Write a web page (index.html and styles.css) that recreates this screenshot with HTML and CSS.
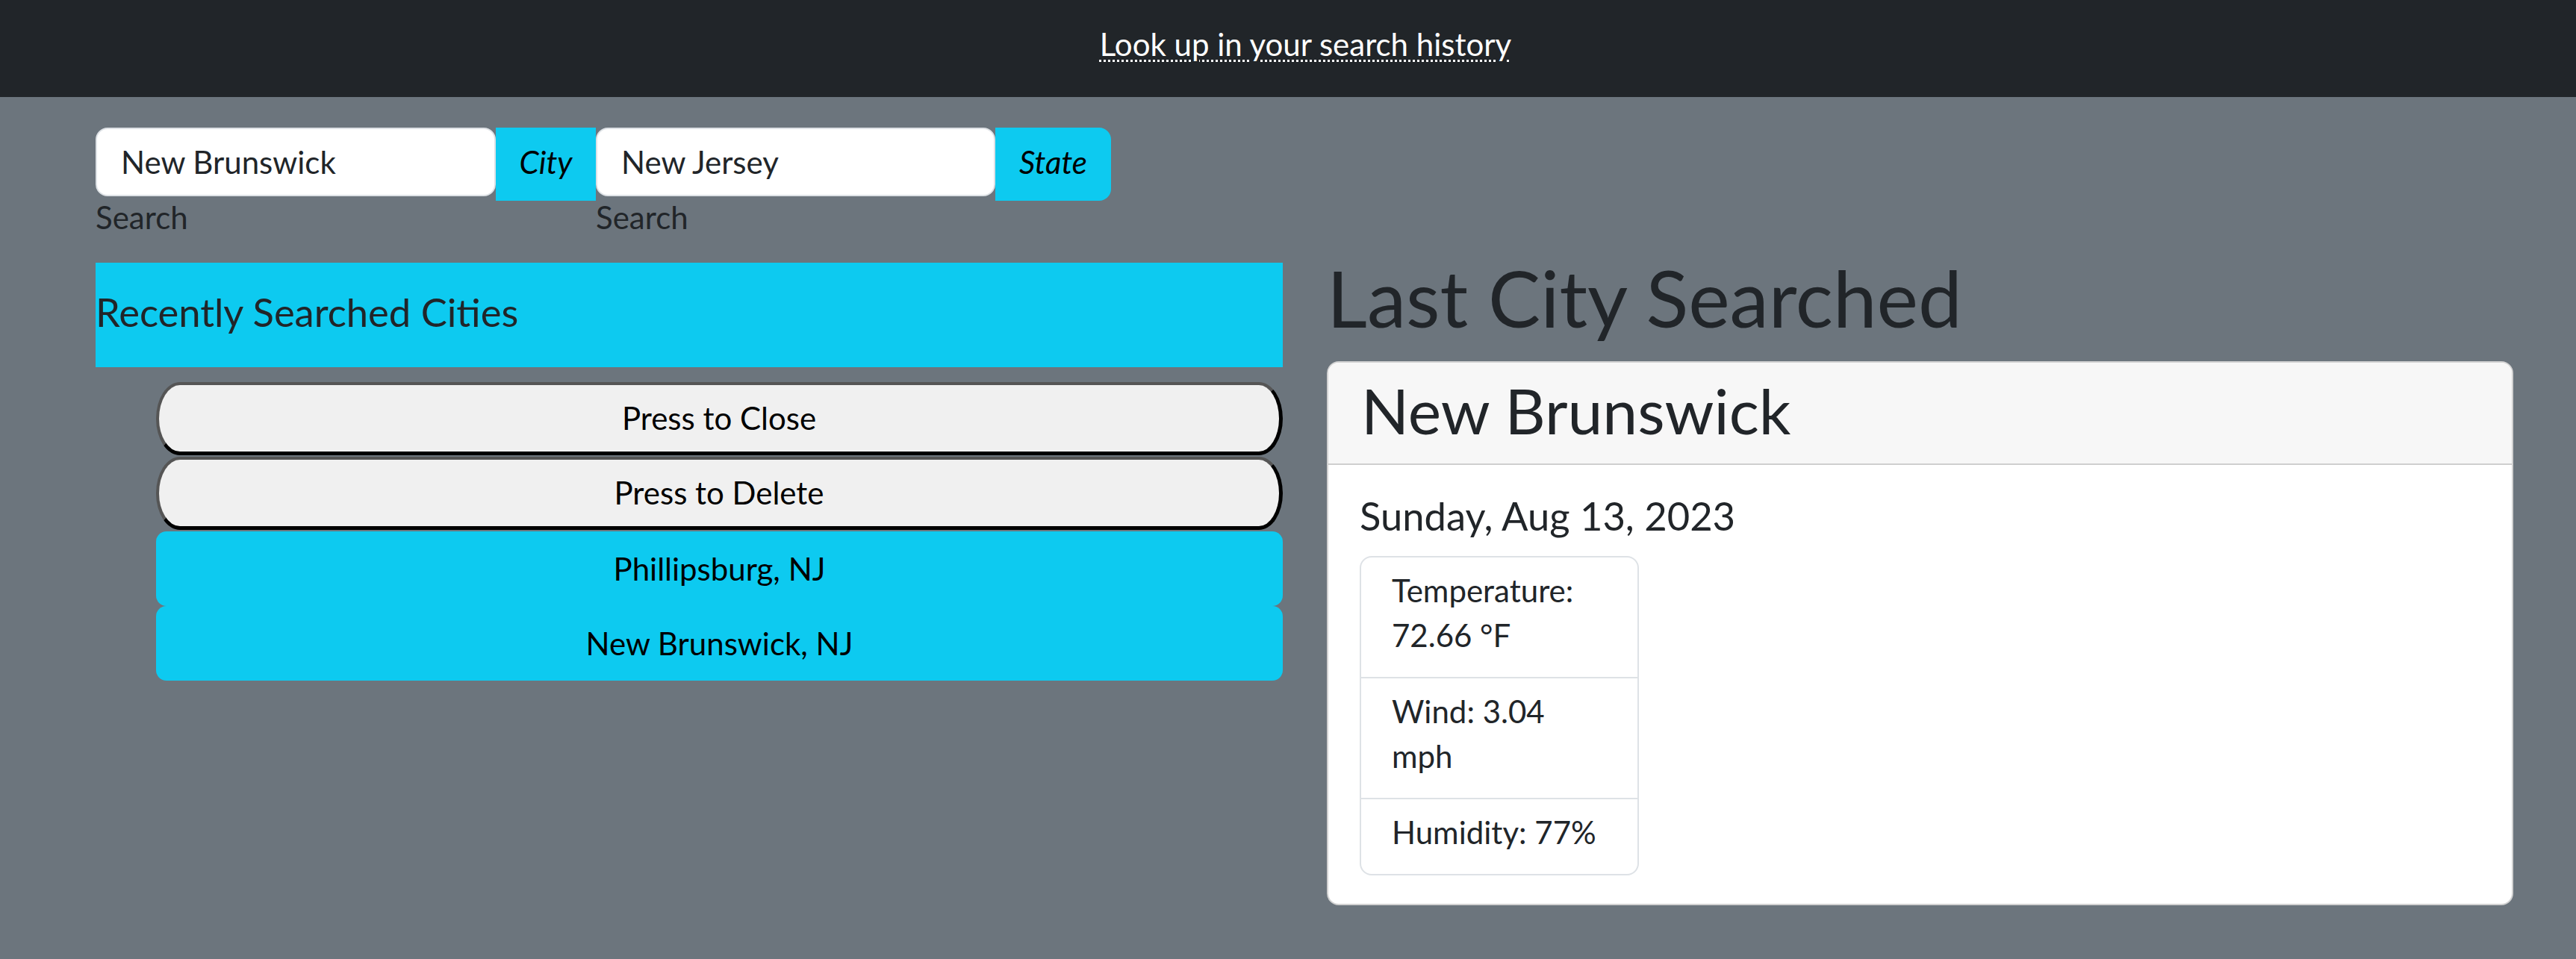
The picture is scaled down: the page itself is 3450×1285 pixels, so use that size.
FILE: index.html
```html
<!DOCTYPE html>
<html lang="en">
<head>
<meta charset="utf-8">
<title>Weather Dashboard</title>
<link rel="stylesheet" href="styles.css">
</head>
<body>
<header class="navbar">
  <abbr class="nav-link" title="Search history">Look up in your search history</abbr>
</header>

<main class="page">
  <form class="search-row">
    <div class="field">
      <div class="group">
        <input class="text-input" type="text" value="New Brunswick">
        <span class="addon">City</span>
      </div>
      <label class="field-label">Search</label>
    </div>
    <div class="field">
      <div class="group">
        <input class="text-input" type="text" value="New Jersey">
        <span class="addon addon-end">State</span>
      </div>
      <label class="field-label">Search</label>
    </div>
  </form>

  <div class="columns">
    <section class="history">
      <h5 class="history-title">Recently Searched Cities</h5>
      <ul class="history-list">
        <li><button class="btn-plain" type="button">Press to Close</button></li>
        <li><button class="btn-plain" type="button">Press to Delete</button></li>
        <li><button class="btn-city" type="button">Phillipsburg, NJ</button></li>
        <li><button class="btn-city" type="button">New Brunswick, NJ</button></li>
      </ul>
    </section>

    <section class="current">
      <h1 class="current-title">Last City Searched</h1>
      <div class="card">
        <div class="card-header">
          <h2 class="city-name">New Brunswick</h2>
        </div>
        <div class="card-body">
          <h5 class="date">Sunday, Aug 13, 2023</h5>
          <ul class="stats">
            <li class="stat">Temperature: 72.66 °F</li>
            <li class="stat">Wind: 3.04<br>mph</li>
            <li class="stat">Humidity: 77%</li>
          </ul>
        </div>
      </div>
    </section>
  </div>
</main>
</body>
</html>
```
FILE: styles.css
```css
* { box-sizing: border-box; }

html, body {
  margin: 0;
  padding: 0;
}

body {
  background: #6c757d;
  color: #212529;
  font-family: "Lato", "Open Sans", sans-serif;
  font-size: 42px;
  line-height: 1.5;
  min-height: 1285px;
}

/* ---------- navbar ---------- */
.navbar {
  background: #212529;
  height: 130px;
  padding: 28px 0 0 47px;
  display: flex;
  justify-content: center;
  align-items: flex-start;
}

.nav-link {
  color: #ffffff;
  font-size: 42px;
  line-height: 63px;
  text-decoration: underline dotted;
  text-decoration-thickness: 3px;
  text-underline-offset: 5px;
}

/* ---------- page ---------- */
.page {
  padding: 41px 0 0 128px;
}

/* ---------- search row ---------- */
.search-row {
  display: flex;
  margin: 0;
}

.field {
  display: flex;
  flex-direction: column;
}

.group {
  display: flex;
  align-items: flex-start;
  height: 92px;
}

.text-input {
  width: 536px;
  height: 92px;
  border: 2px solid #dee2e6;
  border-radius: 16px;
  background: #ffffff;
  padding: 0 30px 0 32px;
  font-family: "Lato", "Open Sans", sans-serif;
  font-size: 42px;
  color: #212529;
  outline: none;
}

.field + .field .text-input {
  width: 535px;
}

.addon {
  width: 134px;
  height: 98px;
  background: #0dcaf0;
  color: #000000;
  font-style: italic;
  text-align: center;
  padding-top: 15px;
  line-height: 63px;
}

.addon-end {
  width: 155px;
  border-radius: 0 16px 16px 0;
}

.field-label {
  margin-top: -3px;
  line-height: 63px;
  color: #212529;
}

/* ---------- two columns ---------- */
.columns {
  display: grid;
  grid-template-columns: 1590px 1589px;
  column-gap: 59px;
  align-items: start;
  margin-top: 12px;
}

/* left column */
.history {
  padding-top: 17px;
}

.history-title {
  margin: 0;
  background: #0dcaf0;
  font-size: 52.5px;
  font-weight: 400;
  line-height: 63px;
  padding: 34px 0 43px 0;
}

.history-list {
  list-style: none;
  margin: 20px 0 0 0;
  padding: 0 0 0 81px;
}

.history-list li {
  display: block;
}

.btn-plain,
.btn-city {
  display: block;
  width: 100%;
  font-family: "Lato", "Open Sans", sans-serif;
  font-size: 42px;
  line-height: 63px;
  color: #000000;
  text-align: center;
  cursor: pointer;
}

.btn-plain {
  height: 98px;
  margin-bottom: 2px;
  background: #f0f0f0;
  border-style: solid;
  border-width: 4px 5px 5px 4px;
  border-color: #555555 #000000 #000000 #555555;
  border-radius: 32px / 49px;
  padding: 0;
}

.btn-city {
  height: 100px;
  background: #0dcaf0;
  border: none;
  border-radius: 14px;
  padding: 0;
}

/* right column */
.current-title {
  margin: 0 0 23px 0;
  font-size: 105px;
  font-weight: 400;
  line-height: 1.2;
  color: #212529;
}

.card {
  background: #ffffff;
  border: 2px solid #d2d2d2;
  border-radius: 16px;
  overflow: hidden;
}

.card-header {
  background: #f7f7f7;
  border-bottom: 2px solid #cfcfcf;
  padding: 14px 42px 20px 44px;
}

.city-name {
  margin: 0;
  font-size: 84px;
  font-weight: 400;
  line-height: 1.2;
  color: #212529;
}

.card-body {
  padding: 36px 42px 38px 42px;
}

.date {
  margin: 0 0 23px 0;
  font-size: 52.5px;
  font-weight: 400;
  line-height: 63px;
  color: #212529;
}

.stats {
  list-style: none;
  margin: 0;
  padding: 0;
  width: 374px;
  border: 2px solid #dee2e6;
  border-radius: 16px;
}

.stat {
  padding: 14px 40px 26px 41px;
  line-height: 60px;
  color: #212529;
}

.stat + .stat {
  border-top: 2px solid #dee2e6;
}
```
